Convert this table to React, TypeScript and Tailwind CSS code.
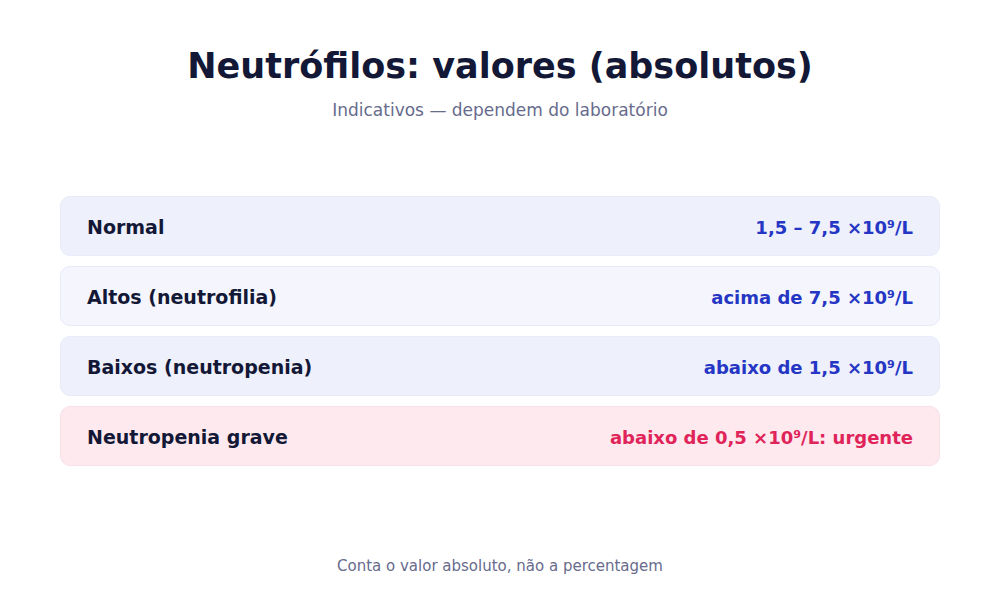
import React from "react";

const rows = [
  {
    label: "Normal",
    value: "1,5 – 7,5 ×10⁹/L",
    box: "bg-[#eef0fc] border-[#e8ebfa]",
    valueColor: "text-[#2536c4]",
  },
  {
    label: "Altos (neutrofilia)",
    value: "acima de 7,5 ×10⁹/L",
    box: "bg-[#f5f6fd] border-[#e8eaf7]",
    valueColor: "text-[#2536c4]",
  },
  {
    label: "Baixos (neutropenia)",
    value: "abaixo de 1,5 ×10⁹/L",
    box: "bg-[#eef0fc] border-[#e8ebfa]",
    valueColor: "text-[#2536c4]",
  },
  {
    label: "Neutropenia grave",
    value: "abaixo de 0,5 ×10⁹/L: urgente",
    box: "bg-[#fde9ee] border-[#f8e0e7]",
    valueColor: "text-[#e0245a]",
  },
];

export default function App() {
  return (
    <div className="flex h-[600px] w-[1000px] flex-col items-center bg-white font-['DejaVu_Sans',sans-serif]">
      <h1 className="mt-[44px] text-[35px] font-bold leading-[44px] text-[#131836]">
        Neutrófilos: valores (absolutos)
      </h1>
      <p className="mt-[10px] text-[17px] leading-[24px] text-[#676b8c]">
        Indicativos — dependem do laboratório
      </p>

      <div className="mt-[74px] flex w-[880px] flex-col gap-[10px]">
        {rows.map((row, index) => (
          <div
            key={index}
            className={`flex h-[60px] items-center justify-between rounded-[10px] border px-[26px] pt-[3px] ${row.box}`}
          >
            <span className="text-[19px] font-bold text-[#131836]">{row.label}</span>
            <span className={`text-[18px] font-bold ${row.valueColor}`}>{row.value}</span>
          </div>
        ))}
      </div>

      <p className="mt-[90px] text-[15px] leading-[20px] text-[#676b8c]">
        Conta o valor absoluto, não a percentagem
      </p>
    </div>
  );
}
